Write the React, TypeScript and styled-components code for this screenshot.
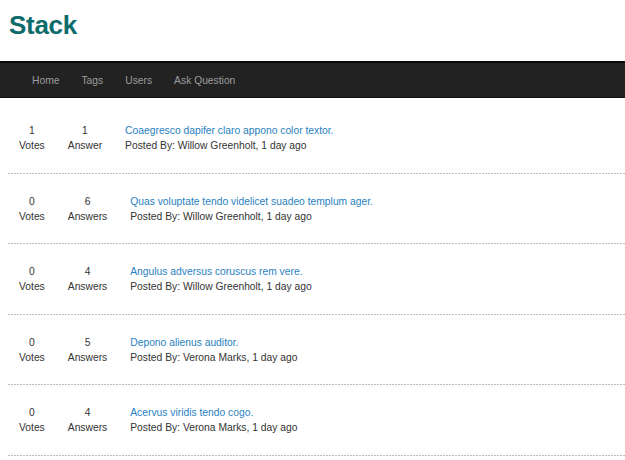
import React from "react";
import styled, { createGlobalStyle } from "styled-components";

const Global = createGlobalStyle`
  html, body { margin: 0; padding: 0; background: #fff; }
  body { font-family: "Liberation Sans", Arial, Helvetica, sans-serif; font-size: 10.3px; color: #333; }
`;

const Page = styled.div`
  display: flex;
  flex-direction: column;
`;

const Header = styled.header`
  padding: 10px 9px 0;
  height: 61px;
  box-sizing: border-box;
`;

const Brand = styled.h1`
  margin: 0;
  font-size: 26px;
  line-height: 30px;
  font-weight: bold;
  color: #0e6b6b;
  letter-spacing: -0.3px;
`;

const NavBar = styled.nav`
  background: #222;
  border-top: 2px solid #0a0a0a;
  border-bottom: 1px solid #111;
  height: 37px;
  box-sizing: border-box;
  display: flex;
  align-items: center;
  padding-left: 32px;
  gap: 22px;
`;

const NavLink = styled.a`
  color: #9d9d9d;
  text-decoration: none;
  font-size: 10.3px;
  line-height: 15px;
`;

const List = styled.div`
  display: flex;
  flex-direction: column;
  padding: 5px 0 0 8px;
`;

const Row = styled.div`
  display: flex;
  align-items: flex-start;
  padding: 20px 0 20.5px 11px;
  gap: 23px;
  background-image: repeating-linear-gradient(to right, #bdbdbd 0 2px, transparent 2px 3px);
  background-size: 100% 1px;
  background-repeat: no-repeat;
  background-position: bottom left;
`;

const Stat = styled.div`
  display: flex;
  flex-direction: column;
  align-items: center;
  line-height: 15px;
  color: #333;
`;

const Summary = styled.div`
  display: flex;
  flex-direction: column;
  line-height: 15px;
`;

const Title = styled.a`
  color: #2a7fc1;
  text-decoration: none;
`;

const Meta = styled.span`
  color: #333;
`;

const questions = [
  { votes: 1, answers: 1, title: "Coaegresco dapifer claro appono color textor.", author: "Willow Greenholt" },
  { votes: 0, answers: 6, title: "Quas voluptate tendo videlicet suadeo templum ager.", author: "Willow Greenholt" },
  { votes: 0, answers: 4, title: "Angulus adversus coruscus rem vere.", author: "Willow Greenholt" },
  { votes: 0, answers: 5, title: "Depono alienus auditor.", author: "Verona Marks" },
  { votes: 0, answers: 4, title: "Acervus viridis tendo cogo.", author: "Verona Marks" },
];

export default function App() {
  return (
    <Page>
      <Global />
      <Header>
        <Brand>Stack</Brand>
      </Header>
      <NavBar>
        <NavLink href="#">Home</NavLink>
        <NavLink href="#">Tags</NavLink>
        <NavLink href="#">Users</NavLink>
        <NavLink href="#">Ask Question</NavLink>
      </NavBar>
      <List>
        {questions.map((q, i) => (
          <Row key={i}>
            <Stat>
              <span>{q.votes}</span>
              <span>Votes</span>
            </Stat>
            <Stat>
              <span>{q.answers}</span>
              <span>{q.answers === 1 ? "Answer" : "Answers"}</span>
            </Stat>
            <Summary>
              <Title href="#">{q.title}</Title>
              <Meta>Posted By: {q.author}, 1 day ago</Meta>
            </Summary>
          </Row>
        ))}
      </List>
    </Page>
  );
}
